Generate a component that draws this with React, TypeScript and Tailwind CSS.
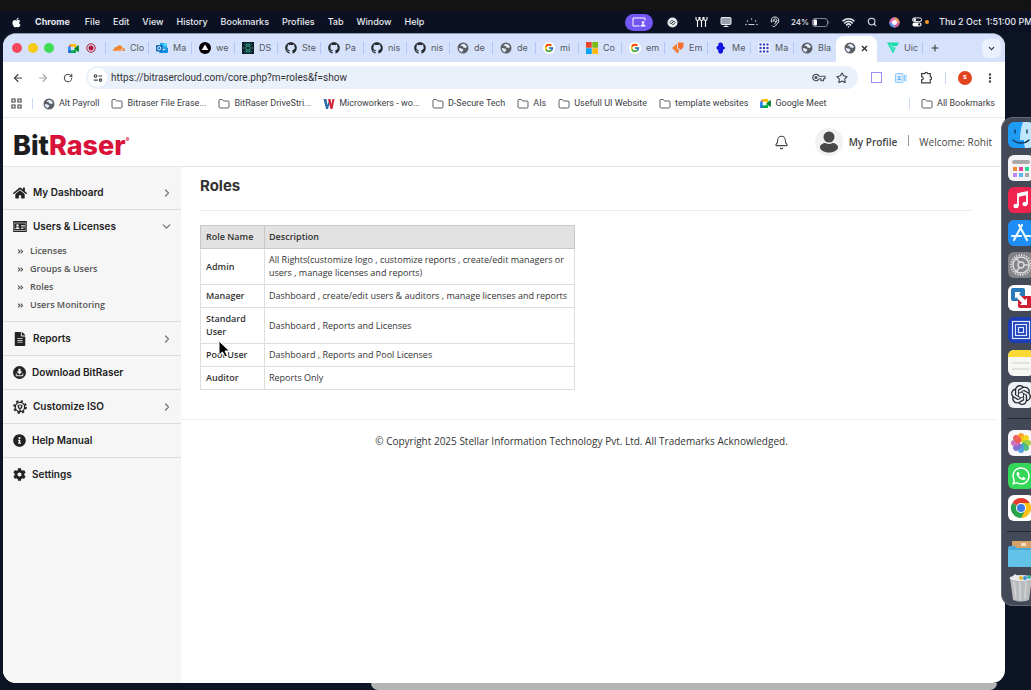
import type { ReactNode } from "react";
import {
  ArrowLeft,
  ArrowRight,
  Bell,
  ChevronDown,
  ChevronRight,
  EllipsisVertical,
  Folder,
  Monitor,
  Plus,
  RotateCw,
  Search,
  Star,
  Wifi,
  X,
} from "lucide-react";
import {
  FaAngleDoubleRight,
  FaApple,
  FaCog,
  FaFileAlt,
  FaGithub,
  FaHome,
  FaInfoCircle,
  FaWhatsapp,
} from "react-icons/fa";
import { FcGoogle } from "react-icons/fc";
import { SiCloudflare, SiOpenai } from "react-icons/si";

/* ---------- small drawings ---------- */

const MeetIcon = ({ className }: { className: string }) => (
  <svg viewBox="0 0 24 20" className={className} aria-hidden="true">
    <path d="M0 6 6 0v6z" fill="#ea4335" />
    <path d="M6 0h10a2 2 0 0 1 2 2v5l-4 3V6H6z" fill="#fbbc04" />
    <path d="M0 6h6v8H0z" fill="#2684fc" />
    <path d="M0 14h6v6H2a2 2 0 0 1-2-2z" fill="#0066da" />
    <path d="M6 14h8v-4l4 3v5a2 2 0 0 1-2 2H6z" fill="#00ac47" />
    <path d="m14 10 8-7c1-.8 2-.3 2 .8v12.400c0 1.100-1 1.600-2 .8z" fill="#00832d" />
  </svg>
);

const GlobeIcon = () => (
  <svg viewBox="0 0 24 24" className="size-3 shrink-0" aria-hidden="true">
    <circle cx="12" cy="12" r="11" fill="#5b6067" />
    <path d="M13 4c3 0 6 3 7 6l-3 2-4-1-2-3-4-1c1-2 3-3 6-3z" fill="#e3eaf8" />
    <path d="M3.500 12l6 1 3 2v2l-2 1v2.500C6 20 3.500 16 3.500 12z" fill="#e3eaf8" />
  </svg>
);

const OutlookIcon = () => (
  <svg viewBox="0 0 24 24" className="size-3 shrink-0" aria-hidden="true">
    <path d="M8 2h14v12H8z" fill="#28a8ea" />
    <path d="M15 2h7v6h-7z" fill="#50d9ff" />
    <path d="M6 11l9 6 9-6v9a2 2 0 0 1-2 2H8a2 2 0 0 1-2-2z" fill="#1490df" />
    <rect y="6" width="13" height="13" rx="1.500" fill="#0f6cbd" />
    <ellipse cx="6.500" cy="12.500" rx="3" ry="3.400" fill="none" stroke="#fff" strokeWidth="1.900" />
  </svg>
);

const TriangleIcon = () => (
  <svg viewBox="0 0 24 24" className="size-3 shrink-0" aria-hidden="true">
    <circle cx="12" cy="12" r="12" fill="#000" />
    <path d="m12 5 6.500 11h-13z" fill="#fff" />
  </svg>
);

const BurstIcon = () => (
  <svg viewBox="0 0 24 24" className="size-3 shrink-0" aria-hidden="true">
    <rect width="24" height="24" fill="#12202b" />
    <g stroke="#2fb8a0" strokeWidth="1.600" strokeLinecap="round">
      <path d="M12 3v18M3 12h18M5.500 5.500l13 13M18.500 5.500l-13 13M8.500 3.500l7 17M15.500 3.500l-7 17" />
    </g>
    <circle cx="12" cy="12" r="3" fill="#12202b" />
  </svg>
);

const MicrosoftIcon = () => (
  <svg viewBox="0 0 24 24" className="size-3 shrink-0" aria-hidden="true">
    <path d="M0 0h11.400v11.400H0z" fill="#e8442a" />
    <path d="M12.600 0H24v11.400H12.600z" fill="#7cba12" />
    <path d="M0 12.600h11.400V24H0z" fill="#0aa3ee" />
    <path d="M12.600 12.600H24V24H12.600z" fill="#fdb813" />
  </svg>
);

const OrangeIcon = () => (
  <svg viewBox="0 0 24 24" className="size-3 shrink-0" aria-hidden="true">
    <path d="M0 12 10 3v9l5 5-4 6z" fill="#ef7d3c" />
    <path d="M12 1h11v9l-6 6-5-5z" fill="#f26f2e" />
  </svg>
);

const BlueIcon = () => (
  <svg viewBox="0 0 24 24" className="size-3 shrink-0" aria-hidden="true">
    <path d="M11 1a5 5 0 0 1 5 3v4l5 4-5 4v4a5 5 0 0 1-8 2c-2-2-2-4-1-6-5-1-6-7 0-9-1-3 0-6 4-6z" fill="#1414e0" />
  </svg>
);

const DotsIcon = () => (
  <svg viewBox="0 0 24 24" className="size-3 shrink-0" aria-hidden="true">
    <rect width="24" height="24" rx="4" fill="#eef2ff" />
    <g fill="#2a36b8">
      {[3, 10, 17].map((y) => [3, 10, 17].map((x) => <rect key={`${x}-${y}`} x={x} y={y} width="4" height="4" />))}
    </g>
  </svg>
);

const MintIcon = () => (
  <svg viewBox="0 0 24 24" className="size-3 shrink-0" aria-hidden="true">
    <path d="M0 1h24l-4 7H12l2 3h4l-6 12z" fill="#16dcab" />
    <path d="m7 4 6 12" stroke="#d9e5fb" strokeWidth="1.500" />
  </svg>
);

const WorkersIcon = () => (
  <svg viewBox="0 0 24 24" className="size-3 shrink-0" aria-hidden="true">
    <path d="M1 2h6l2 12 3-9h3l-5 17H6z" fill="#2f6fa8" />
    <path d="M10 2h5l2 10 2-10h4l-4 20h-4z" fill="#d8263b" />
  </svg>
);

const TuneIcon = () => (
  <svg viewBox="0 0 24 24" className="size-[10px]" fill="none" stroke="#3c4043" strokeWidth="2.600" aria-hidden="true">
    <circle cx="6" cy="7" r="3" />
    <path d="M13 7h9M2 17h9" />
    <circle cx="18" cy="17" r="3" />
  </svg>
);

const KeyIcon = () => (
  <svg viewBox="0 0 28 18" className="h-[9px] w-[14px] shrink-0" fill="none" stroke="#4a4d52" strokeWidth="2.400" aria-hidden="true">
    <path d="M14 6.500h12v5h-3v4h-5v-4h-4a6.500 6.500 0 1 1 0-5z" strokeLinejoin="round" />
    <circle cx="8" cy="9" r="1.800" fill="#4a4d52" />
  </svg>
);

const IdCardIcon = () => (
  <svg viewBox="0 0 28 22" className="h-[11px] w-[14px] shrink-0" aria-hidden="true">
    <rect width="28" height="22" rx="2" fill="#222" />
    <rect x="2" y="4" width="24" height="15" fill="none" stroke="#f5f5f5" strokeWidth="1.200" />
    <circle cx="9" cy="9" r="2.600" fill="#f5f5f5" />
    <path d="M4.500 16c0-5 9-5 9 0z" fill="#f5f5f5" />
    <path d="M16 9h8M16 12h8M16 15h5" stroke="#f5f5f5" strokeWidth="1.500" />
  </svg>
);

const DownloadIcon = () => (
  <svg viewBox="0 0 24 24" className="size-[13px] shrink-0" aria-hidden="true">
    <circle cx="12" cy="12" r="12" fill="#222" />
    <path d="M10 5h4v5h3.500L12 15.500 6.500 10H10z" fill="#f5f5f5" />
    <path d="M6 14v4h12v-4" fill="none" stroke="#f5f5f5" strokeWidth="1.800" />
  </svg>
);

const GearWrenchIcon = () => (
  <svg viewBox="0 0 24 24" className="size-[14px] shrink-0" fill="none" stroke="#222" aria-hidden="true">
    <circle cx="12" cy="12" r="8" strokeWidth="2.200" />
    <circle cx="12" cy="12" r="10.300" strokeWidth="3" strokeDasharray="4 4.090" />
    <path d="M9 8v3.500a3 3 0 0 0 6 0V8M12 14v7" strokeWidth="2.200" />
    <path d="M12 7v4" strokeWidth="1.600" />
  </svg>
);

/* ---------- macOS menu bar ---------- */

const menus = ["File", "Edit", "View", "History", "Bookmarks", "Profiles", "Tab", "Window", "Help"];

function MenuBar() {
  return (
    <header className="flex h-[22px] shrink-0 items-center overflow-hidden bg-[#0b1122] pl-[11px] text-[9px] font-medium whitespace-nowrap text-[#e8eaf0]">
      <FaApple className="mr-[13px] size-[11px] shrink-0 text-white" />
      <button className="mr-[15px] font-bold">Chrome</button>
      <nav className="flex items-center gap-[13px]">
        {menus.map((m) => (
          <button key={m}>{m}</button>
        ))}
      </nav>
      <div className="ml-auto flex shrink-0 items-center">
        <span className="mr-[14px] flex h-[17px] w-7 items-center justify-center rounded-full bg-[#7357f2]">
          <svg viewBox="0 0 28 20" className="h-[10px] w-[14px]" fill="none" stroke="#fff" strokeWidth="2" aria-hidden="true">
            <path d="M15 18H2V2h24v5" />
            <circle cx="22" cy="11" r="2.500" fill="#fff" stroke="none" />
            <path d="M17 19c0-6 10-6 10 0z" fill="#fff" stroke="none" />
          </svg>
        </span>
        <svg viewBox="0 0 24 24" className="mr-[17px] size-[11px]" aria-hidden="true">
          <circle cx="12" cy="12" r="11" fill="#e9eaee" />
          <path d="M6 12l5-5 3 3-5 5zM10 14l5-5 3 3-5 5z" fill="none" stroke="#222838" strokeWidth="1.800" />
        </svg>
        <svg viewBox="0 0 26 24" className="mr-3 h-3 w-[13px]" fill="none" stroke="#fff" strokeWidth="2.200" aria-hidden="true">
          <path d="M2 2v4a3 3 0 0 0 6 0V2M5 9v13M10 2v4a3 3 0 0 0 6 0V2M13 9v13M18 2v4a3 3 0 0 0 6 0V2M21 9v13" />
        </svg>
        <Monitor className="mr-[13px] size-3" fill="#9ba1ad" strokeWidth={2} />
        <svg viewBox="0 0 26 16" className="mr-3 h-2 w-[13px]" fill="#cfd3dc" aria-hidden="true">
          <circle cx="2" cy="13" r="1.500" /><circle cx="5" cy="6" r="1.500" /><circle cx="13" cy="2" r="1.500" />
          <circle cx="21" cy="6" r="1.500" /><circle cx="24" cy="13" r="1.500" /><path d="M7 12h12v2H7z" />
        </svg>
        <svg viewBox="0 0 20 24" className="mr-[11px] h-3 w-[10px]" fill="none" stroke="#e8eaf0" strokeWidth="2" strokeLinecap="round" aria-hidden="true">
          <path d="M3 12C1 5 5 2 10 2s9 4 7 10c-1 3-4 3-5 6s-5 5-7 2" />
          <path d="M6 11c-1-7 9-7 8-1-1 3-4 3-5 6M8 9l4 3" />
        </svg>
        <span className="mr-[3px] text-[8px]">24%</span>
        <svg viewBox="0 0 36 18" className="mr-3 h-[9px] w-[18px]" aria-hidden="true">
          <rect x="1" y="1" width="30" height="16" rx="5" fill="none" stroke="#8b909c" strokeWidth="1.800" />
          <rect x="3" y="3" width="7" height="12" rx="2" fill="#fff" />
          <path d="M33 6v6c2-1 2-5 0-6z" fill="#8b909c" />
        </svg>
        <Wifi className="mr-3 size-[13px]" strokeWidth={3} />
        <Search className="mr-3 size-[10px]" strokeWidth={2.5} />
        <svg viewBox="0 0 24 24" className="mr-3 size-[11px]" aria-hidden="true">
          <circle cx="12" cy="12" r="11" fill="#e7d5f3" />
          <path d="M12 1A11 11 0 0 1 23 12h-5a6 6 0 0 0-6-6z" fill="#f2994a" />
          <path d="M23 12a11 11 0 0 1-11 11v-5a6 6 0 0 0 6-6z" fill="#e2508e" />
          <path d="M12 23A11 11 0 0 1 1 12h5a6 6 0 0 0 6 6z" fill="#4f8df0" />
          <path d="M1 12A11 11 0 0 1 12 1v5a6 6 0 0 0-6 6z" fill="#e95dac" />
          <circle cx="12" cy="12" r="4" fill="#fff" />
        </svg>
        <svg viewBox="0 0 22 22" className="mr-[3px] size-[10px]" aria-hidden="true">
          <rect x="1" y="2" width="20" height="8" rx="4" fill="none" stroke="#fff" strokeWidth="2" />
          <circle cx="6" cy="6" r="3" fill="#fff" />
          <rect x="1" y="12" width="20" height="9" rx="4.500" fill="#fff" />
          <circle cx="16" cy="16.500" r="2.500" fill="#0b1122" />
        </svg>
        <span className="mr-[10px] size-1 rounded-full bg-[#f59a23]" />
        <span className="w-[92px]">Thu 2 Oct&nbsp; 1:51:00 PM</span>
      </div>
    </header>
  );
}

/* ---------- browser chrome ---------- */

const tabs: { label: string; icon: ReactNode }[] = [
  { label: "Clo", icon: <SiCloudflare className="size-3 shrink-0 text-[#f38020]" /> },
  { label: "Ma", icon: <OutlookIcon /> },
  { label: "we", icon: <TriangleIcon /> },
  { label: "DS", icon: <BurstIcon /> },
  { label: "Ste", icon: <FaGithub className="size-3 shrink-0 text-[#24292f]" /> },
  { label: "Pa", icon: <FaGithub className="size-3 shrink-0 text-[#24292f]" /> },
  { label: "nis", icon: <FaGithub className="size-3 shrink-0 text-[#24292f]" /> },
  { label: "nis", icon: <FaGithub className="size-3 shrink-0 text-[#24292f]" /> },
  { label: "de", icon: <GlobeIcon /> },
  { label: "de", icon: <GlobeIcon /> },
  { label: "mi", icon: <FcGoogle className="size-3 shrink-0 rounded-full bg-white p-px" /> },
  { label: "Co", icon: <MicrosoftIcon /> },
  { label: "em", icon: <FcGoogle className="size-3 shrink-0 rounded-full bg-white p-px" /> },
  { label: "Em", icon: <OrangeIcon /> },
  { label: "Me", icon: <BlueIcon /> },
  { label: "Ma", icon: <DotsIcon /> },
  { label: "Bla", icon: <GlobeIcon /> },
];

function Tab({ label, icon }: { label: string; icon: ReactNode }) {
  return (
    <button className="flex h-3 w-[43px] shrink-0 items-center gap-[5px] border-l border-[#b3c9f5] pl-[7px]">
      {icon}
      <span className="w-3.5 overflow-hidden text-left">{label}</span>
    </button>
  );
}

function TabStrip() {
  return (
    <div className="flex h-7 shrink-0 items-center bg-[#d6e2fb] pl-[9px] text-[9px] whitespace-nowrap text-[#55585e]">
      <div className="flex shrink-0 items-center gap-1.5">
        <span className="size-[10px] rounded-full bg-[#f4485b]" />
        <span className="size-[10px] rounded-full bg-[#f7cb15]" />
        <span className="size-[10px] rounded-full bg-[#3ddc55]" />
      </div>
      <div className="flex w-[51px] shrink-0 items-center gap-[7px] pl-3.5">
        <MeetIcon className="h-[9px] w-[11px]" />
        <svg viewBox="0 0 20 20" className="size-[10px]" aria-hidden="true">
          <circle cx="10" cy="10" r="8.500" fill="none" stroke="#b3163a" strokeWidth="2" />
          <circle cx="10" cy="10" r="5" fill="#b3163a" />
        </svg>
      </div>
      {tabs.map((t, i) => (
        <Tab key={i} {...t} />
      ))}
      <div className="flex w-[41px] shrink-0 items-center justify-between self-end rounded-t-lg bg-white px-2 pt-1.5 pb-2">
        <GlobeIcon />
        <button aria-label="Close tab">
          <X className="size-[9px] text-[#202124]" strokeWidth={3} />
        </button>
      </div>
      <button className="flex shrink-0 items-center gap-[5px] pl-[10px]">
        <MintIcon />
        <span className="w-3.5 overflow-hidden text-left">Uic</span>
      </button>
      <button aria-label="New tab" className="ml-1 flex h-3 shrink-0 items-center border-l border-[#b3c9f5] pl-[7px]">
        <Plus className="size-[10px] text-[#303134]" strokeWidth={2.5} />
      </button>
      <button aria-label="Search tabs" className="mr-1 ml-auto flex size-[19px] shrink-0 items-center justify-center rounded-md bg-[#eaf0fd]">
        <ChevronDown className="size-[9px] text-[#303134]" strokeWidth={3} />
      </button>
    </div>
  );
}

function AddressBar() {
  return (
    <div className="flex h-[31px] shrink-0 items-center bg-white px-[9px] text-[#3c4043]">
      <button aria-label="Back"><ArrowLeft className="size-3" strokeWidth={2.2} /></button>
      <button aria-label="Forward" className="ml-[13px] text-[#a5a8ad]"><ArrowRight className="size-3" strokeWidth={2.2} /></button>
      <button aria-label="Reload" className="ml-[14px]"><RotateCw className="size-[10px]" strokeWidth={2.4} /></button>
      <div className="ml-[13px] flex h-[23px] min-w-0 flex-1 items-center rounded-full bg-[#ebf1fb] pr-[10px] pl-0.5">
        <span className="flex size-[19px] shrink-0 items-center justify-center rounded-full bg-white">
          <TuneIcon />
        </span>
        <input
          aria-label="Address"
          className="min-w-0 flex-1 bg-transparent pl-1 font-['Roboto',sans-serif] text-[10px] text-[#303134] outline-none"
          defaultValue="https://bitrasercloud.com/core.php?m=roles&f=show"
        />
        <KeyIcon />
        <Star className="ml-[10px] size-3 shrink-0" strokeWidth={2.2} />
      </div>
      <span className="ml-[13px] size-[11px] border border-[#9a8cf0]" />
      <svg viewBox="0 0 24 20" className="ml-[13px] h-[10px] w-3" aria-hidden="true">
        <rect x="1" y="1" width="15" height="18" rx="2" fill="#d8ecfc" stroke="#8ac8fa" strokeWidth="2" />
        <circle cx="8.500" cy="8" r="2.200" fill="#5aaaf2" />
        <path d="M5 14c0-4 7-4 7 0z" fill="#5aaaf2" />
        <path d="M18 4h2v12h-2zM21 2h2v16h-2z" fill="#8ac8fa" />
      </svg>
      <button aria-label="Extensions" className="ml-[13px]">
        <svg viewBox="0 0 24 24" className="size-[13px]" fill="none" stroke="#3c4043" strokeWidth="2.200" aria-hidden="true">
          <path d="M3 5h6a2.500 2.500 0 0 1 5 0h5v6a2.500 2.500 0 0 1 0 5v6H3v-5.500a3 3 0 0 0 0-6z" />
        </svg>
      </button>
      <span className="ml-3 h-3 w-px bg-[#c9d8f8]" />
      <span className="ml-3 flex size-[14px] items-center justify-center rounded-full bg-[#e2441f] text-[7px] font-semibold text-white">s</span>
      <button aria-label="Menu" className="ml-3"><EllipsisVertical className="size-3" strokeWidth={3} /></button>
    </div>
  );
}

const FolderIcon = () => <Folder className="size-3 shrink-0 text-[#4a4d52]" strokeWidth={1.8} />;

const bookmarks: { label: string; icon: ReactNode }[] = [
  { label: "Alt Payroll", icon: <GlobeIcon /> },
  { label: "Bitraser File Erase...", icon: <FolderIcon /> },
  { label: "BitRaser DriveStri...", icon: <FolderIcon /> },
  { label: "Microworkers - wo...", icon: <WorkersIcon /> },
  { label: "D-Secure Tech", icon: <FolderIcon /> },
  { label: "AIs", icon: <FolderIcon /> },
  { label: "Usefull UI Website", icon: <FolderIcon /> },
  { label: "template websites", icon: <FolderIcon /> },
  { label: "Google Meet", icon: <MeetIcon className="h-[9px] w-[11px]" /> },
];

function BookmarksBar() {
  return (
    <nav className="flex h-[25px] shrink-0 items-center border-b border-[#e9eaec] bg-white pr-[10px] pb-[3px] pl-2 font-['Roboto',sans-serif] text-[9px] whitespace-nowrap text-[#3c4043]">
      <svg viewBox="0 0 22 22" className="size-[11px]" fill="none" stroke="#45484d" strokeWidth="2.400" aria-label="Apps">
        <path d="M2 2h6v6H2zM14 2h6v6h-6zM2 14h6v6H2zM14 14h6v6h-6z" />
      </svg>
      <span className="mx-[10px] h-[11px] w-px bg-[#c9d8f8]" />
      <div className="flex gap-3">
        {bookmarks.map((b) => (
          <a href="#" key={b.label} className="flex items-center gap-1">
            {b.icon}
            {b.label}
          </a>
        ))}
      </div>
      <span className="mr-[11px] ml-auto h-[11px] w-px bg-[#c9d8f8]" />
      <a href="#" className="flex items-center gap-1">
        <FolderIcon />
        All Bookmarks
      </a>
    </nav>
  );
}

/* ---------- web page ---------- */

function SiteHeader() {
  return (
    <header className="flex h-[49px] shrink-0 items-center border-b border-[#e6e6e6] pr-[13px] pl-[10px] font-['Open_Sans','Noto_Sans',sans-serif] text-[10px] text-[#444]">
      <a href="#" className="mt-2 flex items-start font-['Inter',sans-serif] text-[27px] leading-7 font-extrabold text-[#1d1d1f]">
        Bit<span className="text-[#d9123a]">Raser</span>
        <span className="text-[6px] leading-4 text-[#d9123a]">®</span>
      </a>
      <button aria-label="Notifications" className="ml-auto"><Bell className="size-[15px]" strokeWidth={1.7} /></button>
      <a href="#" className="ml-[26px] flex items-center gap-1.5 font-semibold">
        <svg viewBox="0 0 28 28" className="size-7" aria-hidden="true">
          <circle cx="14" cy="14" r="14" fill="#f1f1f1" />
          <circle cx="14" cy="9" r="5.500" fill="#484848" />
          <path d="M5 18.500c1-2.500 4-4 5.500-3.500 2 1.400 5 1.400 7 0 1.500-.5 4.500 1 5.500 3.500.5 3.500-4 6-9 6s-9.500-2.500-9-6z" fill="#484848" />
        </svg>
        My Profile
      </a>
      <span className="mb-1 ml-[11px] h-[11px] w-px bg-[#999]" />
      <span className="ml-[10px]">Welcome: Rohit</span>
    </header>
  );
}

function NavRow({ icon, label, chevron }: { icon: ReactNode; label: string; chevron?: "right" | "down" }) {
  return (
    <button className="flex h-[33px] w-full items-center gap-1.5 pr-2 pl-[10px] text-left">
      {icon}
      <span className="flex-1">{label}</span>
      {chevron === "right" && <ChevronRight className="size-3 text-[#777]" strokeWidth={2.5} />}
      {chevron === "down" && <ChevronDown className="size-[13px] text-[#777]" strokeWidth={2.5} />}
    </button>
  );
}

const subItems = ["Licenses", "Groups & Users", "Roles", "Users Monitoring"];

function Sidebar() {
  return (
    <aside className="w-[178px] shrink-0 bg-[#f6f6f6] pt-[9px] font-['Inter',sans-serif] text-[10px] font-semibold text-[#222]">
      <ul className="divide-y divide-[#dcdcdc]">
        <li><NavRow icon={<FaHome className="size-[14px]" />} label="My Dashboard" chevron="right" /></li>
        <li className="pb-1.5">
          <NavRow icon={<IdCardIcon />} label="Users & Licenses" chevron="down" />
          <ul className="font-['Open_Sans','Noto_Sans',sans-serif] text-[9px] text-[#555]">
            {subItems.map((s) => (
              <li key={s}>
                <a href="#" className="flex h-[18px] items-center gap-1.5 pb-0.5 pl-3.5">
                  <FaAngleDoubleRight className="size-[7px]" />
                  {s}
                </a>
              </li>
            ))}
          </ul>
        </li>
        <li><NavRow icon={<FaFileAlt className="size-[14px]" />} label="Reports" chevron="right" /></li>
        <li><NavRow icon={<DownloadIcon />} label="Download BitRaser" /></li>
        <li><NavRow icon={<GearWrenchIcon />} label="Customize ISO" chevron="right" /></li>
        <li><NavRow icon={<FaInfoCircle className="size-[13px]" />} label="Help Manual" /></li>
        <li><NavRow icon={<FaCog className="size-[13px]" />} label="Settings" /></li>
      </ul>
    </aside>
  );
}

const roles = [
  ["Admin", "All Rights(customize logo , customize reports , create/edit managers or users , manage licenses and reports)"],
  ["Manager", "Dashboard , create/edit users & auditors , manage licenses and reports"],
  ["Standard User", "Dashboard , Reports and Licenses"],
  ["Pool User", "Dashboard , Reports and Pool Licenses"],
  ["Auditor", "Reports Only"],
];

function RolesPage() {
  return (
    <main className="min-w-0 flex-1 font-['Open_Sans','Noto_Sans',sans-serif] text-[#333]">
      <section className="pr-[33px] pl-[19px]">
        <h1 className="border-b border-[#ececec] pt-[10px] pb-[15px] font-['Inter',sans-serif] text-[15px] leading-[18px] font-bold">Roles</h1>
        <table className="mt-[14px] w-[375px] table-fixed border-collapse text-left text-[9px] leading-[13px]">
          <thead>
            <tr className="bg-[#e2e2e2]">
              <th className="w-[64px] border border-[#c8c8c8] px-[5px] pt-1 pb-[5px] font-semibold">Role Name</th>
              <th className="border border-[#c8c8c8] px-1 pt-1 pb-[5px] font-semibold">Description</th>
            </tr>
          </thead>
          <tbody>
            {roles.map(([name, text]) => (
              <tr key={name}>
                <th scope="row" className="border border-[#dedede] px-[5px] pt-1 pb-[5px] font-semibold">{name}</th>
                <td className="border border-[#dedede] px-1 pt-1 pb-[5px]">{text}</td>
              </tr>
            ))}
          </tbody>
        </table>
      </section>
      <footer className="mt-[29px] mr-[9px] border-t border-[#efefef] pt-[14px] pr-3.5 text-center text-[10px] leading-[14px]">
        © Copyright 2025 Stellar Information Technology Pvt. Ltd. All Trademarks Acknowledged.
      </footer>
    </main>
  );
}

/* ---------- dock ---------- */

const Tile = ({ children, fill }: { children?: ReactNode; fill: string }) => (
  <svg viewBox="0 0 26 26" className="size-[26px] shrink-0" aria-hidden="true">
    <rect width="26" height="26" rx="6" fill={fill} />
    {children}
  </svg>
);

const petals = ["#f9a01b", "#f5d313", "#a3cf3b", "#4bb97a", "#4b9ede", "#7a6fd0", "#c76fb8", "#ee5a50"];

function Dock() {
  return (
    <aside className="absolute top-[117px] right-0 w-[30px] overflow-hidden rounded-l-xl border border-r-0 border-[#656a76] bg-[#434957] pt-1 pb-[3px] pl-1.5">
      <div className="flex h-[286px] w-[26px] flex-col justify-between">
        <Tile fill="#1d9bf5">
          <path d="M15 0h5a6 6 0 0 1 6 6v14a6 6 0 0 1-6 6h-3c-1-3-1-6-1-8h-4c0-7 1-13 3-18z" fill="#bfe6fb" />
          <path d="M7 8v3M19 8v3M5 18c4 4 12 4 16 0" fill="none" stroke="#153a5c" strokeWidth="1.400" strokeLinecap="round" />
        </Tile>
        <Tile fill="#f4f4f6">
          <rect x="4" y="5" width="18" height="4" rx="2" fill="#aaa" />
          <path d="M5 12h4v4H5z" fill="#f58b32" /><path d="M11 12h4v4h-4z" fill="#e83ea0" /><path d="M17 12h4v4h-4z" fill="#26d98c" />
          <path d="M5 18h4v4H5z" fill="#c388f5" /><path d="M11 18h4v4h-4z" fill="#5cb8f5" /><path d="M17 18h4v4h-4z" fill="#aaa" />
        </Tile>
        <Tile fill="#f0234f">
          <path d="M10 19V7l9-2v12" fill="none" stroke="#fff" strokeWidth="1.800" />
          <path d="m10 7 9-2v3l-9 2z" fill="#fff" />
          <ellipse cx="8" cy="19" rx="2.600" ry="2.200" fill="#fff" /><ellipse cx="17" cy="17" rx="2.600" ry="2.200" fill="#fff" />
        </Tile>
        <Tile fill="#1e8df5">
          <path d="m14 5-8 15M11 5l8 15M4 16h9M17 16h5" stroke="#e8f5ff" strokeWidth="2.200" strokeLinecap="round" />
        </Tile>
        <Tile fill="#838488">
          <circle cx="13" cy="13" r="8" fill="none" stroke="#dcdcde" strokeWidth="1.500" />
          <circle cx="13" cy="13" r="10" fill="none" stroke="#dcdcde" strokeWidth="1.800" strokeDasharray="1.400 1.200" />
          <circle cx="13" cy="13" r="3" fill="none" stroke="#dcdcde" strokeWidth="1.400" />
          <path d="m11.500 10.500-4-5M11.500 15.500l-4 5M16 13h6" stroke="#dcdcde" strokeWidth="1.400" />
        </Tile>
        <Tile fill="#fff">
          <rect x="3" y="3" width="14" height="13" rx="2" fill="#2779ba" />
          <rect x="10" y="11" width="14" height="12" rx="2" fill="#cf2033" />
          <path d="M7 7h6l-2 2 6 6 2-2v7h-7l2-2-6-6-1 2z" fill="#fff" />
        </Tile>
        <Tile fill="#1c3fb8">
          <g fill="none" stroke="#dfe8ff" strokeWidth="1.200">
            <rect x="4.500" y="4.500" width="17" height="17" /><rect x="7.500" y="7.500" width="11" height="11" /><rect x="10.500" y="10.500" width="5" height="5" />
          </g>
        </Tile>
        <Tile fill="#f6f6f4">
          <path d="M0 7V6a6 6 0 0 1 6-6h14a6 6 0 0 1 6 6v1z" fill="#fbd934" />
          <path d="M4 13h18M4 19h18" stroke="#cfcfcd" />
        </Tile>
        <Tile fill="#eef1f5">
          <SiOpenai x="3" y="3" size={20} color="#24262b" />
        </Tile>
      </div>
      <div className="-ml-px mt-[10px] border-t border-[#232836]" />
      <div className="mt-[11px] flex h-[91px] w-[26px] flex-col justify-between">
        <Tile fill="#f7f7f9">
          {petals.map((c, i) => (
            <rect key={c} x="10" y="3" width="6" height="9" rx="3" fill={c} fillOpacity="0.95" transform={`rotate(${i * 45} 13 13)`} />
          ))}
        </Tile>
        <Tile fill="#35d759">
          <FaWhatsapp x="3" y="3" size={20} color="#fff" />
        </Tile>
        <Tile fill="#fff">
          <path d="M13 13 4.300 8A10 10 0 0 1 21.700 8z" fill="#e33b2e" />
          <path d="M13 13V8h8.700A10 10 0 0 1 13 23z" fill="#fbc116" />
          <path d="M13 13l4 3-4 7A10 10 0 0 1 4.300 8z" fill="#2ba24c" />
          <circle cx="13" cy="13" r="5" fill="#fff" /><circle cx="13" cy="13" r="4" fill="#3b7de8" />
        </Tile>
      </div>
      <div className="-ml-px mt-[10px] border-t border-[#232836]" />
      <div className="mt-2 flex w-[26px] flex-col gap-[6px]">
        <svg viewBox="0 0 26 28" className="h-7 w-[26px]" aria-hidden="true">
          <path d="M4 1h20v10H4z" fill="#d5a369" /><path d="M13 3h5v3h-5z" fill="#f3dfc2" />
          <path d="M0 8q0-2 2-2h5l2 2h17v19H0z" fill="#4ba9d8" />
          <path d="M0 10h26v15q0 2-2 2H2q-2 0-2-2z" fill="#62c2e8" />
        </svg>
        <svg viewBox="0 0 26 28" className="h-7 w-[26px]" aria-hidden="true">
          <path d="M2 4h22l-3 22q-8 3-16 0z" fill="#b9bbbd" />
          <path d="m6 8 2 17M12 8v18M18 8l-1 17" stroke="#d4d6d8" strokeWidth="1.500" />
          <ellipse cx="13" cy="4" rx="11.500" ry="3" fill="#e8eaec" />
          <path d="m6 1 4 4" stroke="#e9ece8" strokeWidth="3" />
          <circle cx="13" cy="4" r="2" fill="#e5b92d" /><circle cx="17" cy="4" r="2" fill="#3a8fd6" /><circle cx="21" cy="3" r="2" fill="#3fb6a0" />
        </svg>
      </div>
    </aside>
  );
}

export default function App() {
  return (
    <div className="relative flex min-h-screen flex-col overflow-hidden bg-[#0d1424] font-['Inter','Liberation_Sans',sans-serif]">
      <div className="h-[11px] shrink-0 bg-[#131313]" />
      <MenuBar />
      <div className="mr-[26px] ml-[3px] flex flex-1 flex-col overflow-hidden rounded-[13px] border-t border-[#8a94ab] bg-white">
        <TabStrip />
        <AddressBar />
        <BookmarksBar />
        <SiteHeader />
        <div className="flex flex-1">
          <Sidebar />
          <RolesPage />
        </div>
      </div>
      <div className="mr-[34px] ml-[371px] h-[7px] shrink-0 rounded-b-xl bg-[#b5b5b5]" />
      <Dock />
      <svg viewBox="0 0 12 18" className="absolute top-[340px] left-[218px] h-[18px] w-3" aria-hidden="true">
        <path d="M1 1v14l3.500-3 2.500 5 2.500-1-2.500-5h4.500z" fill="#000" stroke="#fff" strokeWidth="1" />
      </svg>
    </div>
  );
}
